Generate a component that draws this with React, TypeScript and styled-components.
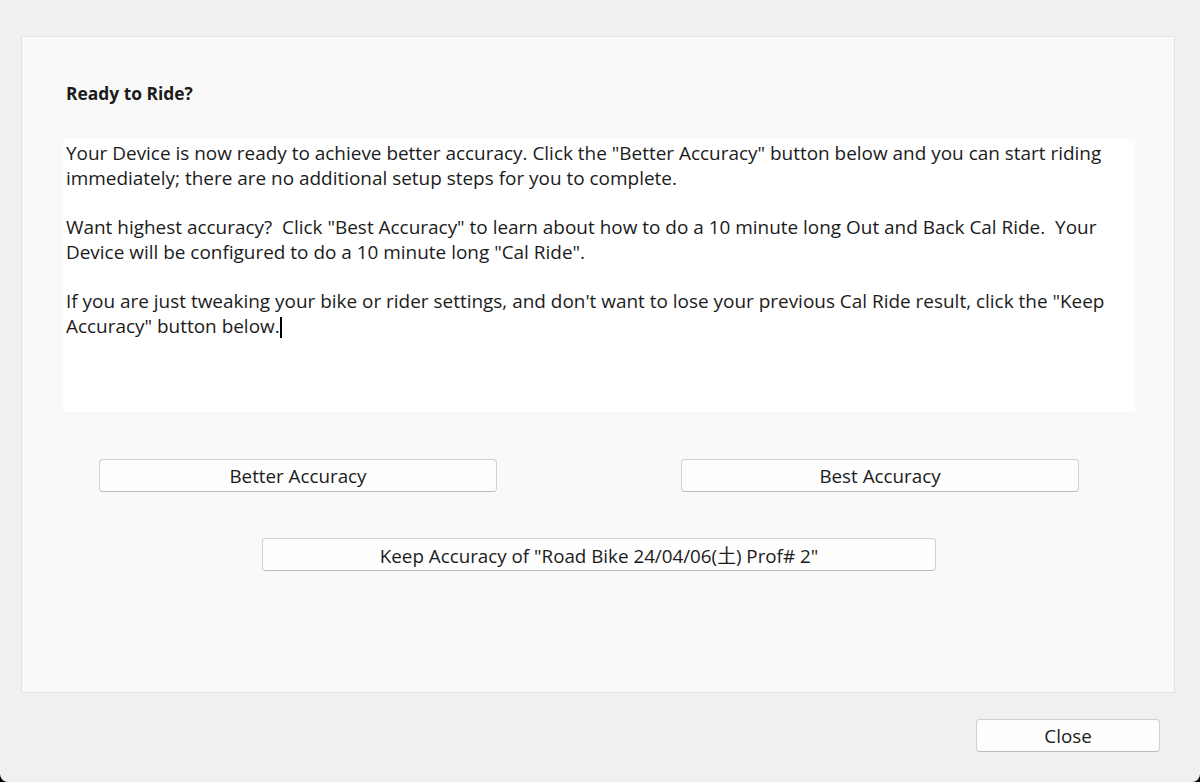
import React from 'react';
import styled, { createGlobalStyle } from 'styled-components';

const COLORS = {
  WINDOW_BG: '#f0f0f0',
  PANEL_BG: '#f9f9f9',
  PANEL_BORDER: '#e3e3e3',
  TEXT_BG: '#ffffff',
  TEXT: '#1b1b1b',
  BUTTON_BG: '#fefefe',
  BUTTON_BORDER: '#d1d1d1',
  BUTTON_BORDER_BOTTOM: '#bcbcbc',
};

const FONT = '"Open Sans", "Noto Sans", "Noto Sans CJK JP", sans-serif';

const GlobalStyle = createGlobalStyle`
  html, body {
    margin: 0;
    padding: 0;
    background: #000;
  }
  * { box-sizing: border-box; }
`;

const Window = styled.div`
  width: 1200px;
  height: 782px;
  background: ${COLORS.WINDOW_BG};
  border-bottom-left-radius: 8px;
  border-bottom-right-radius: 8px;
  padding: 36px 25px 0 21px;
  display: flex;
  flex-direction: column;
  font-family: ${FONT};
  color: ${COLORS.TEXT};
  overflow: hidden;
`;

const Panel = styled.section`
  height: 657px;
  background: ${COLORS.PANEL_BG};
  border: 1px solid ${COLORS.PANEL_BORDER};
  padding: 44px 39px 0 41px;
  display: flex;
  flex-direction: column;
`;

const Title = styled.h1`
  margin: 0 0 0 3px;
  font-size: 17.4px;
  line-height: 25px;
  font-weight: 700;
`;

const MessageBox = styled.div`
  margin-top: 33px;
  height: 273px;
  background: ${COLORS.TEXT_BG};
  padding: 2px 3px;
  font-size: 18.95px;
  line-height: 24.7px;
`;

const Paragraph = styled.p`
  margin: 0 0 24.7px;
`;

const Caret = styled.span`
  display: inline-block;
  width: 2px;
  height: 21px;
  background: #000;
  vertical-align: -5px;
`;

const ButtonRow = styled.div`
  margin-top: 47px;
  padding: 0 56px 0 36px;
  display: flex;
  justify-content: space-between;
`;

const CenterRow = styled.div`
  margin-top: 46px;
  display: flex;
  justify-content: center;
`;

const Button = styled.button<{ $width: number }>`
  width: ${p => p.$width}px;
  height: 33px;
  background: ${COLORS.BUTTON_BG};
  border: 1px solid ${COLORS.BUTTON_BORDER};
  border-bottom-color: ${COLORS.BUTTON_BORDER_BOTTOM};
  border-radius: 4px;
  font-family: ${FONT};
  font-size: 18.8px;
  color: ${COLORS.TEXT};
  padding: 0;
  cursor: default;
`;

const Footer = styled.div`
  margin-top: 26px;
  display: flex;
  justify-content: flex-end;
  padding-right: 15px;
`;

const App: React.FC = () => {
  return (
    <>
      <GlobalStyle />
      <Window>
        <Panel>
          <Title>Ready to Ride?</Title>
          <MessageBox>
            <Paragraph>
              Your Device is now ready to achieve better accuracy. Click the "Better Accuracy" button below and you can start riding immediately; there are no additional setup steps for you to complete.
            </Paragraph>
            <Paragraph>
              Want highest accuracy?&nbsp; Click "Best Accuracy" to learn about how to do a 10 minute long Out and Back Cal Ride.&nbsp; Your Device will be configured to do a 10 minute long "Cal Ride".
            </Paragraph>
            <Paragraph>
              If you are just tweaking your bike or rider settings, and don't want to lose your previous Cal Ride result, click the "Keep Accuracy" button below.<Caret />
            </Paragraph>
          </MessageBox>
          <ButtonRow>
            <Button $width={398}>Better Accuracy</Button>
            <Button $width={398}>Best Accuracy</Button>
          </ButtonRow>
          <CenterRow>
            <Button $width={674}>Keep Accuracy of "Road Bike 24/04/06(土) Prof# 2"</Button>
          </CenterRow>
        </Panel>
        <Footer>
          <Button $width={184}>Close</Button>
        </Footer>
      </Window>
    </>
  );
};

export default App;
